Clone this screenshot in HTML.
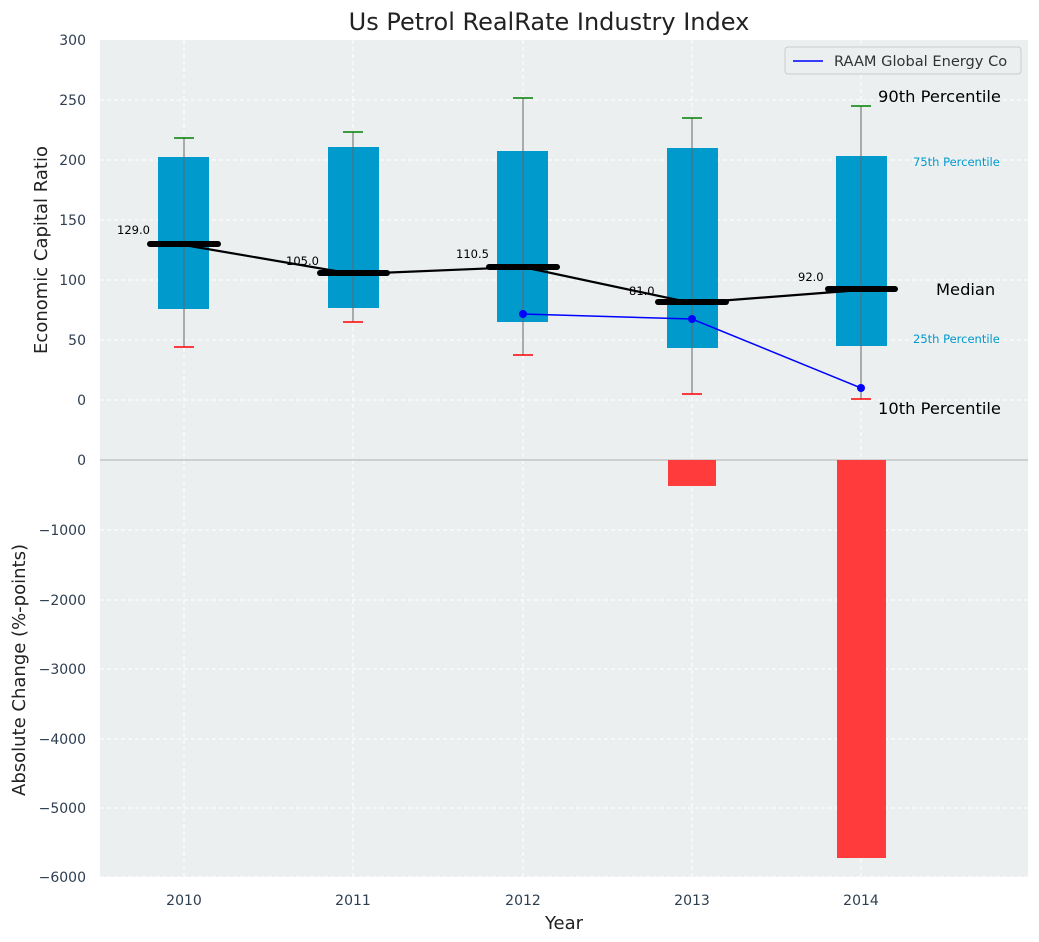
<!DOCTYPE html>
<html><head><meta charset="utf-8"><style>body{margin:0;background:#fff}svg{display:block;font-family:"DejaVu Sans","Liberation Sans",sans-serif}</style></head><body>
<svg width="1039" height="942" viewBox="0 0 1039 942" xmlns="http://www.w3.org/2000/svg">
<rect x="100" y="40" width="928" height="420" fill="#ebeff0"/>
<rect x="100" y="460" width="928" height="417" fill="#ebeff0"/>
<g stroke="#fff" stroke-dasharray="4,3" stroke-width="1">
<line x1="100" x2="1028" y1="100" y2="100"/><line x1="100" x2="1028" y1="160" y2="160"/><line x1="100" x2="1028" y1="220" y2="220"/><line x1="100" x2="1028" y1="280" y2="280"/><line x1="100" x2="1028" y1="340" y2="340"/><line x1="100" x2="1028" y1="400" y2="400"/>
<line x1="100" x2="1028" y1="530" y2="530"/><line x1="100" x2="1028" y1="600" y2="600"/><line x1="100" x2="1028" y1="669" y2="669"/><line x1="100" x2="1028" y1="739" y2="739"/><line x1="100" x2="1028" y1="808" y2="808"/><line x1="100" x2="1028" y1="877" y2="877"/>
<line x1="184" x2="184" y1="40" y2="877"/><line x1="353" x2="353" y1="40" y2="877"/><line x1="523" x2="523" y1="40" y2="877"/><line x1="692" x2="692" y1="40" y2="877"/><line x1="861" x2="861" y1="40" y2="877"/>
</g>
<line x1="100" x2="1028" y1="460" y2="460" stroke="#b0b0b0" stroke-width="1"/>
<g fill="#009ACD">
<rect x="158" y="157" width="51" height="152"/><rect x="328" y="147" width="51" height="161"/><rect x="497" y="151" width="51" height="171"/><rect x="667" y="148" width="51" height="200"/><rect x="836" y="156" width="51" height="190"/>
</g>
<g stroke="#666" stroke-width="1">
<line x1="184" x2="184" y1="138" y2="347"/><line x1="353" x2="353" y1="132" y2="322"/><line x1="523" x2="523" y1="98" y2="355"/><line x1="692" x2="692" y1="118" y2="394"/><line x1="861" x2="861" y1="106" y2="399"/>
</g>
<g stroke="green" stroke-width="1.5">
<line x1="174" x2="194" y1="138" y2="138"/><line x1="343" x2="363" y1="132" y2="132"/><line x1="513" x2="533" y1="98" y2="98"/><line x1="682" x2="702" y1="118" y2="118"/><line x1="851" x2="871" y1="106" y2="106"/>
</g>
<g stroke="red" stroke-width="1.5">
<line x1="174" x2="194" y1="347" y2="347"/><line x1="343" x2="363" y1="322" y2="322"/><line x1="513" x2="533" y1="355" y2="355"/><line x1="682" x2="702" y1="394" y2="394"/><line x1="851" x2="871" y1="399" y2="399"/>
</g>
<polyline points="184,245 353,274 523,267 692,303 861,290" fill="none" stroke="#000" stroke-width="2.2"/>
<g stroke="#000" stroke-width="6" stroke-linecap="round">
<line x1="150" x2="218" y1="244" y2="244"/><line x1="320" x2="387" y1="273" y2="273"/><line x1="489" x2="557" y1="267" y2="267"/><line x1="658" x2="726" y1="302" y2="302"/><line x1="828" x2="895" y1="289" y2="289"/>
</g>
<polyline points="523,314 692,319 861,388" fill="none" stroke="#00f" stroke-width="1.5"/>
<g fill="#00f"><circle cx="523" cy="314" r="4"/><circle cx="692" cy="319" r="4"/><circle cx="861" cy="388" r="4"/></g>
<g font-size="11.5" fill="#000">
<text x="117" y="234">129.0</text><text x="286" y="265">105.0</text><text x="456" y="258">110.5</text><text x="629" y="295">81.0</text><text x="798" y="281">92.0</text>
</g>
<rect x="668" y="460" width="48" height="26" fill="#ff3b3b"/>
<rect x="837" y="460" width="49" height="398" fill="#ff3b3b"/>
<text x="878" y="102" font-size="16.3">90th Percentile</text>
<text x="913" y="166" font-size="11.5" fill="#009ACD">75th Percentile</text>
<text x="936" y="295" font-size="16.3">Median</text>
<text x="913" y="343" font-size="11.5" fill="#009ACD">25th Percentile</text>
<text x="878" y="414" font-size="16.3">10th Percentile</text>
<rect x="785" y="47" width="236" height="27" rx="3" fill="#ebeff0" stroke="#ccc"/>
<line x1="793" x2="823" y1="61" y2="61" stroke="#00f" stroke-width="1.5"/>
<text x="834" y="66" font-size="14.6" fill="#333">RAAM Global Energy Co</text>
<text x="549" y="30" font-size="24" fill="#222" text-anchor="middle">Us Petrol RealRate Industry Index</text>
<g font-size="14" fill="#2d3e50" text-anchor="end">
<text x="86" y="45">300</text><text x="86" y="105">250</text><text x="86" y="165">200</text><text x="86" y="225">150</text><text x="86" y="285">100</text><text x="86" y="345">50</text><text x="86" y="405">0</text>
<text x="86" y="465">0</text><text x="86" y="535">−1000</text><text x="86" y="605">−2000</text><text x="86" y="674">−3000</text><text x="86" y="744">−4000</text><text x="86" y="813">−5000</text><text x="86" y="882">−6000</text>
</g>
<g font-size="14" fill="#2d3e50" text-anchor="middle">
<text x="184" y="905">2010</text><text x="353" y="905">2011</text><text x="523" y="905">2012</text><text x="692" y="905">2013</text><text x="861" y="905">2014</text>
</g>
<text x="564" y="929" font-size="18" fill="#222" text-anchor="middle">Year</text>
<text transform="translate(47,250) rotate(-90)" font-size="18" fill="#222" text-anchor="middle">Economic Capital Ratio</text>
<text transform="translate(25,670) rotate(-90)" font-size="18" fill="#222" text-anchor="middle">Absolute Change (%-points)</text>
</svg>
</body></html>
